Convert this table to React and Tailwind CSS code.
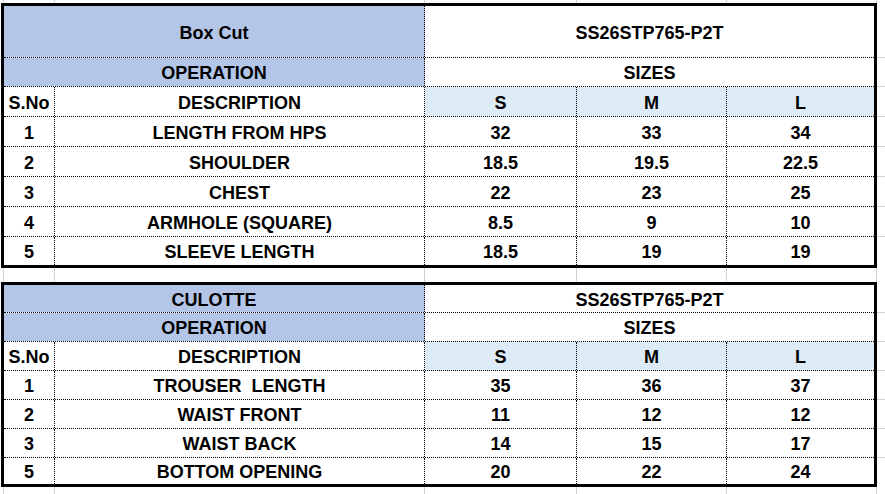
const WIDTHS = ["w-[51px]", "w-[370px]", "w-[152px]", "w-[150px]", "w-[147px]"];
const STRIP = ["w-[4px]", "w-[51px]", "w-[370px]", "w-[152px]", "w-[150px]", "w-[150px]"];

const BOX_CUT = {
  title: "Box Cut",
  style: "SS26STP765-P2T",
  heights: ["h-[52px]", "h-[29px]", "h-[30px]"],
  rowH: ["h-[30px]", "h-[30px]", "h-[30px]", "h-[30px]", "h-[28px]"],
  rows: [
    ["1", "LENGTH FROM HPS", "32", "33", "34"],
    ["2", "SHOULDER", "18.5", "19.5", "22.5"],
    ["3", "CHEST", "22", "23", "25"],
    ["4", "ARMHOLE (SQUARE)", "8.5", "9", "10"],
    ["5", "SLEEVE LENGTH", "18.5", "19", "19"],
  ],
};

const CULOTTE = {
  title: "CULOTTE",
  style: "SS26STP765-P2T",
  heights: ["h-[28px]", "h-[29px]", "h-[29px]"],
  rowH: ["h-[29px]", "h-[29px]", "h-[29px]", "h-[26px]"],
  rows: [
    ["1", "TROUSER  LENGTH", "35", "36", "37"],
    ["2", "WAIST FRONT", "11", "12", "12"],
    ["3", "WAIST BACK", "14", "15", "17"],
    ["5", "BOTTOM OPENING", "20", "22", "24"],
  ],
};

const cell = "flex shrink-0 items-center justify-center whitespace-pre pt-[2px]";
const dotR = "border-r border-dotted border-black";
const dotB = "border-b border-dotted border-black";

function Strip({ h }) {
  return (
    <div className={`flex ${h}`}>
      {STRIP.map((w, i) => (
        <div key={i} className={`${w} shrink-0 border-r border-[#d4d4d4]`} />
      ))}
    </div>
  );
}

function Sheet({ data }) {
  const [h0, h1, h2] = data.heights;
  const all = [h0, h1, h2, ...data.rowH];
  return (
    <div className="flex">
      <div className="ml-[1px] w-[876px] shrink-0 border-[3px] border-black">
        <div className={`flex ${h0} ${dotB}`}>
          <div className={`${cell} w-[421px] bg-[#b4c6e7] ${dotR}`}>{data.title}</div>
          <div className={`${cell} w-[449px]`}>{data.style}</div>
        </div>
        <div className={`flex ${h1} ${dotB}`}>
          <div className={`${cell} w-[421px] bg-[#b4c6e7] ${dotR}`}>OPERATION</div>
          <div className={`${cell} w-[449px]`}>SIZES</div>
        </div>
        <div className={`flex ${h2} ${dotB}`}>
          <div className={`${cell} ${WIDTHS[0]} ${dotR}`}>S.No</div>
          <div className={`${cell} ${WIDTHS[1]} ${dotR}`}>DESCRIPTION</div>
          <div className={`${cell} ${WIDTHS[2]} bg-[#ddebf7] ${dotR}`}>S</div>
          <div className={`${cell} ${WIDTHS[3]} bg-[#ddebf7] ${dotR}`}>M</div>
          <div className={`${cell} ${WIDTHS[4]} bg-[#ddebf7]`}>L</div>
        </div>
        {data.rows.map((r, ri) => (
          <div
            key={ri}
            className={`flex ${data.rowH[ri]} ${ri < data.rows.length - 1 ? dotB : ""}`}
          >
            {r.map((v, ci) => (
              <div key={ci} className={`${cell} ${WIDTHS[ci]} ${ci < 4 ? dotR : ""}`}>
                {v}
              </div>
            ))}
          </div>
        ))}
      </div>
      <div className="flex w-[8px] flex-col pt-[3px]">
        {all.map((h, i) => (
          <div key={i} className={`${h} shrink-0 ${i < all.length - 1 ? "border-b border-[#d4d4d4]" : ""}`} />
        ))}
      </div>
    </div>
  );
}

export default function App() {
  return (
    <div className="h-[494px] w-[885px] overflow-hidden bg-white font-['Liberation_Sans',Arial,sans-serif] text-[18px] leading-none font-bold text-black">
      <Strip h="h-[3px]" />
      <Sheet data={BOX_CUT} />
      <Strip h="h-[14px]" />
      <Sheet data={CULOTTE} />
      <Strip h="h-[7px]" />
    </div>
  );
}
